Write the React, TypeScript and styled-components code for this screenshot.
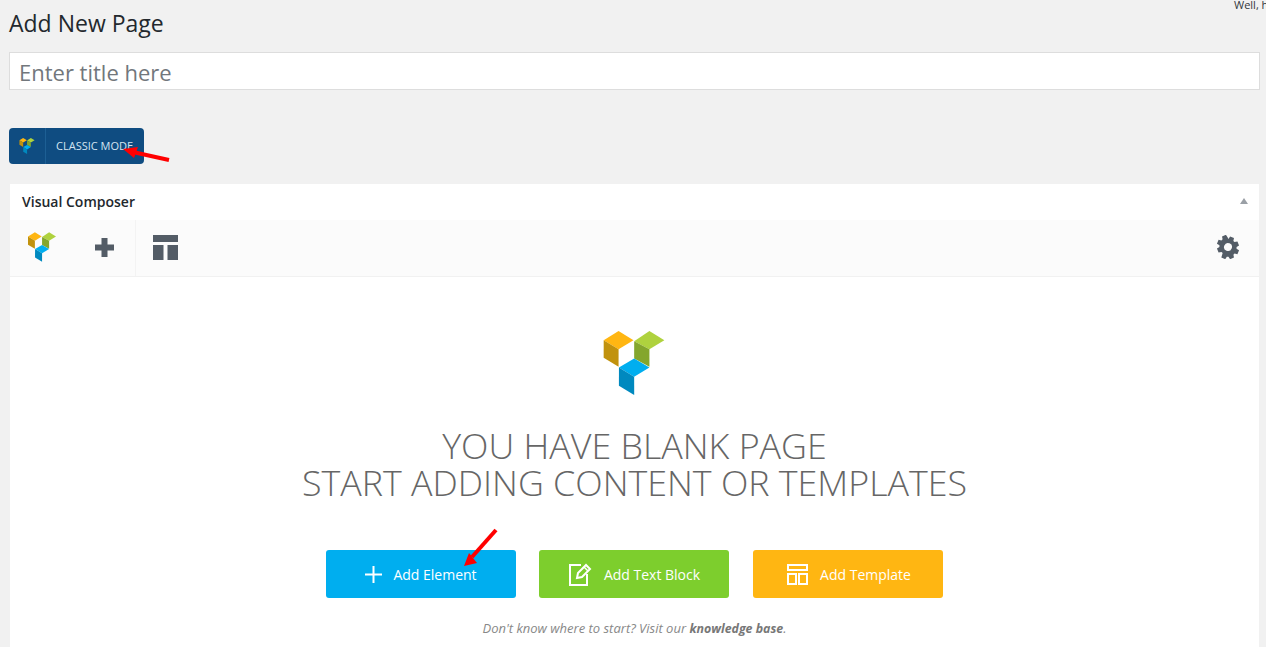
import React, { FC } from 'react';
import styled, { createGlobalStyle } from 'styled-components';

const GlobalStyle = createGlobalStyle`
  html, body {
    margin: 0;
    height: 100%;
    overflow: hidden;
    background: #f1f1f1;
    font-family: "Open Sans", "Liberation Sans", sans-serif;
  }
`;

const Page = styled.div`
  position: relative;
  height: 647px;
  padding: 0 6px 0 9px;
  overflow: hidden;
`;

const Greeting = styled.span`
  position: absolute;
  top: -3px;
  left: 1234px;
  font-size: 11px;
  line-height: 15px;
  color: #32373c;
  white-space: nowrap;
`;

const Title = styled.h1`
  margin: 0;
  padding-top: 9px;
  height: 52px;
  box-sizing: border-box;
  font-size: 23px;
  line-height: 29px;
  font-weight: 400;
  color: #23282d;
`;

const TitleInput = styled.input`
  display: block;
  box-sizing: border-box;
  width: 1251px;
  height: 38px;
  padding: 2px 9px 0;
  border: 1px solid #ddd;
  background: #fff;
  font-family: inherit;
  font-size: 22px;
  outline: none;

  &::placeholder {
    color: #72777c;
    opacity: 1;
  }
`;

const ClassicButton = styled.button`
  display: flex;
  align-items: center;
  width: 135px;
  height: 36px;
  margin-top: 38px;
  padding: 0;
  border: 0;
  border-radius: 4px;
  background: #0f4c81;
  color: #d4e4f1;
  font-family: inherit;
  font-size: 11px;
`;

const ClassicIcon = styled.span`
  display: flex;
  align-items: center;
  justify-content: center;
  box-sizing: border-box;
  width: 37px;
  height: 100%;
  border-right: 1px solid #1d5f94;
`;

const ClassicLabel = styled.span`
  padding: 0 0 2px 10px;
  white-space: nowrap;
`;

const Panel = styled.section`
  width: 1249px;
  min-height: 480px;
  margin: 20px 0 0 1px;
  background: #fff;
`;

const PanelHeader = styled.header`
  display: flex;
  align-items: center;
  justify-content: space-between;
  box-sizing: border-box;
  height: 36px;
  padding: 0 12px 2px;
  font-size: 14px;
  font-weight: 600;
  color: #23282d;
`;

const CollapseArrow = styled.span`
  width: 0;
  height: 0;
  margin-right: -1px;
  border-left: 4.5px solid transparent;
  border-right: 4.5px solid transparent;
  border-bottom: 6px solid #9aa0a6;
`;

const Toolbar = styled.div`
  display: flex;
  align-items: stretch;
  box-sizing: border-box;
  height: 57px;
  background: #fbfbfb;
  border-bottom: 1px solid #f1f1f1;
`;

const ToolCell = styled.div<{ $width: number }>`
  display: flex;
  align-items: center;
  justify-content: center;
  box-sizing: border-box;
  width: ${(p) => p.$width}px;
  padding-bottom: 2px;
`;

const DividedCell = styled(ToolCell)`
  border-right: 1px solid #f3f3f3;
`;

const SettingsCell = styled(ToolCell)`
  margin-left: auto;
  padding-right: 2px;
`;

const Body = styled.div`
  display: flex;
  flex-direction: column;
  align-items: center;
  padding-top: 54px;
`;

const BlankLogo = styled.div`
  display: flex;
  height: 64px;
  margin-right: 2px;
`;

const Headline = styled.h2`
  margin: 32px 0 0;
  font-size: 35.8px;
  line-height: 37px;
  font-weight: 300;
  text-align: center;
  color: #666;
`;

const Actions = styled.div`
  display: flex;
  gap: 23px;
  margin-top: 49px;
`;

const ActionButton = styled.button<{ $color: string; $gap: number }>`
  display: flex;
  align-items: center;
  justify-content: center;
  gap: ${(p) => p.$gap}px;
  width: 190px;
  height: 48px;
  padding: 0;
  border: 0;
  border-radius: 3px;
  background: ${(p) => p.$color};
  color: #fff;
  font-family: inherit;
  font-size: 14px;

  &:last-child {
    margin-left: 1px;
    padding-left: 2px;
  }
`;

const Hint = styled.p`
  margin: 22px 0 0;
  font-size: 13px;
  line-height: 16px;
  font-style: italic;
  color: #888;

  b {
    font-size: 12.4px;
    font-weight: 700;
    color: #777;
  }
`;

const ArrowOverlay = styled.svg`
  position: absolute;
  left: 0;
  top: 0;
  pointer-events: none;
`;

const Logo: FC<{ width: number; height: number }> = ({ width, height }) => (
  <svg width={width} height={height} viewBox="70 47 183 193">
    <polygon points="70,75 115,47 160,75 115,102" fill="#ffb612" />
    <polygon points="70,75 115,102 115,155 70,128" fill="#c1920d" />
    <polygon points="162,78 208,47 253,75 208,102" fill="#afd23e" />
    <polygon points="162,78 208,102 208,155 162,130" fill="#84a62c" />
    <polygon points="116,157 162,130 208,157 162,185" fill="#00aeef" />
    <polygon points="116,157 162,185 162,240 116,212" fill="#0089bf" />
  </svg>
);

const PlusIcon: FC = () => (
  <svg width="19" height="19" viewBox="0 0 19 19">
    <path d="M6.5 0h6v6.5H19v6h-6.500V19h-6v-6.500H0v-6h6.500z" fill="#535c66" />
  </svg>
);

const TemplateIcon: FC = () => (
  <svg width="25" height="25" viewBox="0 0 25 25">
    <path d="M0 0h25v7H0zM0 10h10.500v15H0zM14.500 10H25v15H14.500z" fill="#535c66" />
  </svg>
);

const GearIcon: FC = () => (
  <svg width="24" height="24" viewBox="0 0 24 24">
    <path
      fillRule="evenodd"
      fill="#535c66"
      d="M9.600 0h4.800l.6 3.300 1.700.7 2.800-1.900 3.400 3.400-1.900 2.800.7 1.700 3.300.6v4.800l-3.300.6-.7 1.700 1.900 2.800-3.400 3.400-2.800-1.900-1.700.7-.6 3.300H9.600L9 20.700 7.300 20l-2.800 1.900-3.400-3.400L3 15.700 2.300 14 -1 13.400V8.600L2.300 8 3 6.300 1.100 3.500 4.500.1l2.800 1.900L9 3.300zM12 7.500a4.500 4.500 0 1 0 0 9 4.500 4.500 0 0 0 0-9z"
      transform="rotate(22.5 12 12) translate(12 12) scale(.88) translate(-12 -12)"
    />
  </svg>
);

const AddIcon: FC = () => (
  <svg width="17" height="17" viewBox="0 0 17 17">
    <path d="M8.500 0v17M0 8.500h17" stroke="#fff" strokeWidth="2" fill="none" />
  </svg>
);

const TextBlockIcon: FC = () => (
  <svg width="24" height="24" viewBox="0 0 24 24" fill="none" stroke="#fff" strokeWidth="2">
    <path d="M13 3H2v20h17V12" />
    <path d="M9 16l1-5 8-8 4 4-8 8z" />
    <path d="M16 5l4 4" strokeWidth="1.500" />
  </svg>
);

const AddTemplateIcon: FC = () => (
  <svg width="21" height="21" viewBox="0 0 21 21" fill="none" stroke="#fff" strokeWidth="2">
    <path d="M1 1h19v5H1zM1 10h8v10H1zM12 10h8v10h-8z" />
  </svg>
);

const actions = [
  { label: 'Add Element', color: '#00aeef', gap: 11, icon: <AddIcon /> },
  { label: 'Add Text Block', color: '#7dce2d', gap: 12, icon: <TextBlockIcon /> },
  { label: 'Add Template', color: '#ffb612', gap: 12, icon: <AddTemplateIcon /> },
];

export default function App() {
  return (
    <Page>
      <GlobalStyle />
      <Greeting>Well, hello</Greeting>
      <Title>Add New Page</Title>
      <TitleInput placeholder="Enter title here" />
      <ClassicButton>
        <ClassicIcon>
          <Logo width={16} height={16} />
        </ClassicIcon>
        <ClassicLabel>CLASSIC MODE</ClassicLabel>
      </ClassicButton>
      <Panel>
        <PanelHeader>
          Visual Composer
          <CollapseArrow />
        </PanelHeader>
        <Toolbar>
          <ToolCell $width={63}>
            <Logo width={28} height={30} />
          </ToolCell>
          <DividedCell $width={63}>
            <PlusIcon />
          </DividedCell>
          <ToolCell $width={59}>
            <TemplateIcon />
          </ToolCell>
          <SettingsCell $width={60}>
            <GearIcon />
          </SettingsCell>
        </Toolbar>
        <Body>
          <BlankLogo>
            <Logo width={62} height={64} />
          </BlankLogo>
          <Headline>
            YOU HAVE BLANK PAGE
            <br />
            START ADDING CONTENT OR TEMPLATES
          </Headline>
          <Actions>
            {actions.map((a) => (
              <ActionButton key={a.label} $color={a.color} $gap={a.gap}>
                {a.icon}
                {a.label}
              </ActionButton>
            ))}
          </Actions>
          <Hint>
            Don't know where to start? Visit our <b>knowledge base</b>.
          </Hint>
        </Body>
      </Panel>
      <ArrowOverlay width="1266" height="647" viewBox="0 0 1266 647">
        <path d="M169 160L135 152.500" stroke="#f00" strokeWidth="4" fill="none" />
        <polygon points="123,149 138,147 134,158" fill="#f00" />
        <path d="M496 530L472 557" stroke="#f00" strokeWidth="4" fill="none" />
        <polygon points="464,566 469,553 477,563" fill="#f00" />
      </ArrowOverlay>
    </Page>
  );
}
